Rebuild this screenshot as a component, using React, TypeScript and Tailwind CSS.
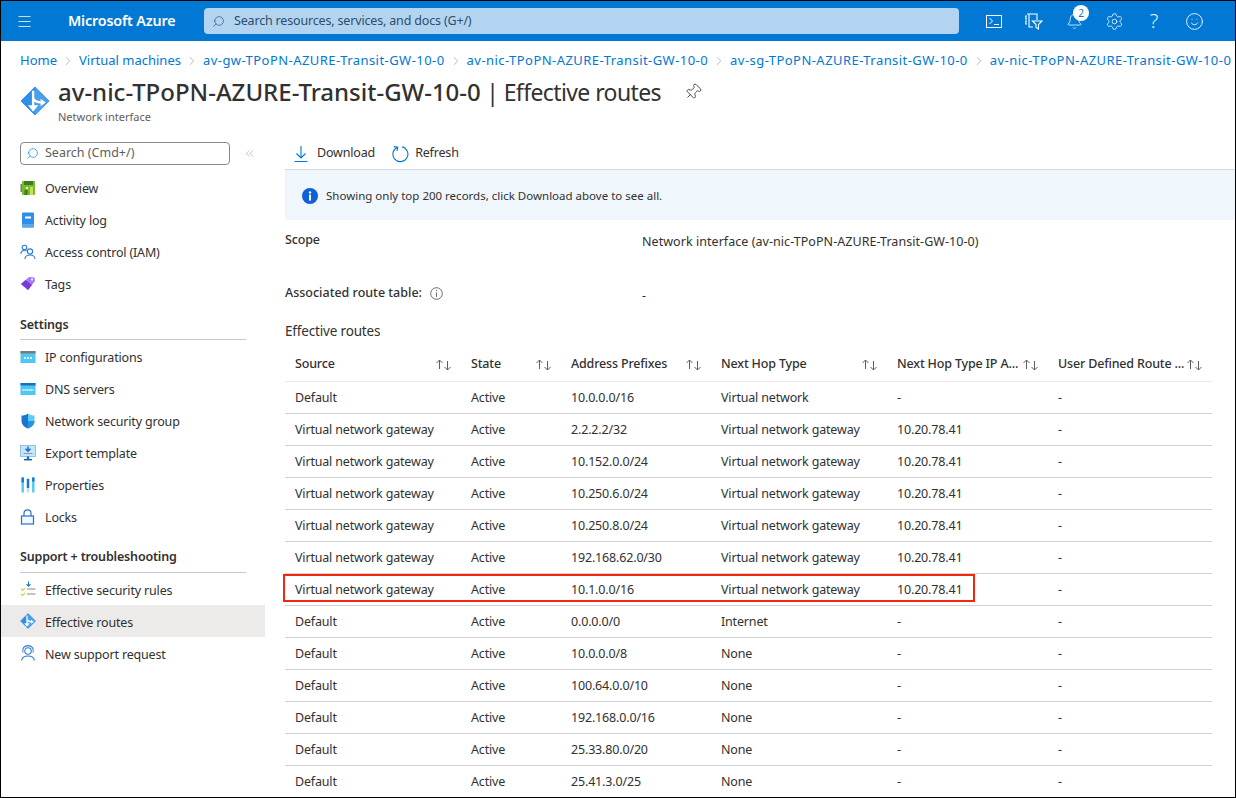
import React from "react";
import { Menu, Search, ChevronRight, ChevronsLeft, Pin, Bell, Settings, Smile } from "lucide-react";

function RouteIcon({ size = 16 }: { size?: number }) {
  return (
    <svg width={size} height={size} viewBox="0 0 32 32">
      <path d="M16 1 L31 16 L16 31 L1 16 Z" fill="#2f8fe6" stroke="#2f8fe6" strokeWidth="1" strokeLinejoin="round" />
      <path d="M16 1 L31 16 L16 31 Z" fill="#4d9fe9" />
      <path d="M14 5 V24 M14 13 C15 16 18 17.5 23 17.5" stroke="#ffffff" strokeWidth="2.6" fill="none" />
      <path d="M8.5 20.5 H19.5 L14 27.5 Z M22 13.5 V21.5 L27.5 17.5 Z" fill="#ffffff" />
    </svg>
  );
}

function SortArrows() {
  return (
    <svg width="18" height="12" viewBox="0 0 18 12" fill="none" stroke="#605e5c" strokeWidth="1">
      <path d="M4.5 10 V1 M1.5 4 L4.5 1 L7.5 4" />
      <path d="M12.5 2 V11 M9.5 8 L12.5 11 L15.5 8" />
    </svg>
  );
}

function DirectoryIcon() {
  return (
    <svg width="18" height="18" viewBox="0 0 18 18" fill="none" stroke="#ffffff" strokeWidth="1.1">
      <path d="M2 2 H12 V8 M4 2 V15 H8 M2 4 H0.8 V7 H2 M2 9 H0.8 V12 H2" />
      <path d="M7.5 9 H17 L13.5 12.5 V17 L11 15.5 V12.5 Z" />
    </svg>
  );
}

const sideIcons: Record<string, React.ReactNode> = {
  overview: (
    <svg width="16" height="16" viewBox="0 0 16 16">
      <rect x="0.5" y="4" width="2.5" height="8" fill="#7a7a7a" />
      <rect x="2" y="1" width="13" height="14" rx="1" fill="#76bc2d" />
      <rect x="4" y="1" width="9" height="4" fill="#3e7a22" />
      <rect x="6" y="7" width="2" height="2" fill="#e8f5d8" />
      <rect x="10" y="7" width="3" height="8" fill="#c9dd5a" />
      <rect x="4.5" y="10" width="3" height="5" fill="#3e7a22" />
    </svg>
  ),
  activity: (
    <svg width="16" height="16" viewBox="0 0 16 16">
      <rect x="2" y="0.5" width="12" height="15" rx="1" fill="#2f8fe6" />
      <rect x="2" y="12" width="12" height="3.5" rx="1" fill="#5ea7e8" />
      <rect x="5" y="4.5" width="6" height="2" fill="#ffffff" />
    </svg>
  ),
  iam: (
    <svg width="16" height="16" viewBox="0 0 16 16" fill="none" stroke="#2b7cd3" strokeWidth="1.1">
      <circle cx="4.5" cy="3.5" r="2.3" />
      <path d="M0.8 10 C1 7 3 6.5 4.5 6.5 C5.5 6.5 6 6.7 6.6 7" />
      <circle cx="10" cy="7.5" r="2.6" />
      <path d="M5 15 C5 12 7.5 11 10 11 C12.5 11 15 12 15 15" />
    </svg>
  ),
  tags: (
    <svg width="16" height="16" viewBox="0 0 16 16">
      <path d="M1 8 L9 1 L14.5 1.5 L15 5 L8 14 Z" fill="#a67af4" />
      <path d="M1 8 L8 14 L12 9 L5.5 4 Z" fill="#773adc" />
      <circle cx="12" cy="3.5" r="1" fill="#ffffff" />
    </svg>
  ),
  ip: (
    <svg width="16" height="16" viewBox="0 0 16 16">
      <rect x="0.5" y="2" width="15" height="12" fill="#50c7f3" />
      <rect x="0.5" y="2" width="15" height="2.5" fill="#7a7a7a" />
      <path d="M4 9 H12" stroke="#ffffff" strokeWidth="1.6" strokeDasharray="2 1" />
    </svg>
  ),
  dns: (
    <svg width="16" height="16" viewBox="0 0 16 16">
      <rect x="0.5" y="2" width="15" height="12" fill="#50c7f3" />
      <rect x="0.5" y="2" width="15" height="2.5" fill="#1b6fc2" />
      <path d="M2.5 9 H13.5" stroke="#ffffff" strokeWidth="1.6" strokeDasharray="1.4 0.6" />
    </svg>
  ),
  nsg: (
    <svg width="16" height="16" viewBox="0 0 16 16">
      <path d="M8 0.5 C10 2 12 2.5 14.5 2.5 V8 C14.5 12 11 14.5 8 15.5 Z" fill="#5ecbf3" />
      <path d="M8 0.5 C6 2 4 2.5 1.5 2.5 V8 C1.5 12 5 14.5 8 15.5 Z" fill="#1b74d0" />
      <path d="M1.5 8 H14.5 C14.5 12 11 14.5 8 15.5 V8 H1.5 Z" fill="#2a90e0" />
    </svg>
  ),
  export: (
    <svg width="16" height="16" viewBox="0 0 16 16">
      <rect x="0.5" y="0.5" width="15" height="11" fill="#c5e6f8" stroke="#7fb6da" strokeWidth="0.8" />
      <path d="M8 1.5 V6 M5.5 3.8 L8 6.3 L10.5 3.8" stroke="#1b6fc2" strokeWidth="1.5" fill="none" />
      <rect x="3.5" y="8" width="9" height="1" fill="#7a9cbc" />
      <rect x="6.8" y="11.5" width="2.4" height="2.5" fill="#1b6fc2" />
      <rect x="4" y="14" width="8" height="1.4" fill="#0f5aa5" />
    </svg>
  ),
  props: (
    <svg width="16" height="16" viewBox="0 0 16 16">
      <rect x="1.5" y="0.5" width="2.4" height="15" fill="#50c7f3" />
      <rect x="1.5" y="0.5" width="2.4" height="5" fill="#1b74d0" />
      <rect x="6.8" y="0.5" width="2.4" height="15" fill="#b3e3f7" />
      <rect x="6.8" y="2" width="2.4" height="9" fill="#1b74d0" />
      <rect x="12.1" y="0.5" width="2.4" height="15" fill="#50c7f3" />
      <rect x="12.1" y="0.5" width="2.4" height="4" fill="#1b74d0" />
    </svg>
  ),
  locks: (
    <svg width="16" height="16" viewBox="0 0 16 16" fill="none" stroke="#2b6fc4" strokeWidth="1.2">
      <rect x="1.5" y="7" width="12" height="8" fill="#f1f7fd" />
      <path d="M4 7 V4.2 C4 2.2 5.6 0.8 7.5 0.8 C9.4 0.8 11 2.2 11 4.2 V7" />
    </svg>
  ),
  security: (
    <svg width="16" height="16" viewBox="0 0 16 16" fill="none" strokeWidth="1.1">
      <path d="M8.5 0.5 V5 M6.5 3.2 L8.5 5.2 L10.5 3.2" stroke="#1b74d0" />
      <path d="M7 8 H15.5 M7 13 H15.5" stroke="#8a8886" />
      <path d="M1 8 L2.5 9.5 L5 7 M1 13 L2.5 14.5 L5 12" stroke="#d9c94a" />
    </svg>
  ),
  routes: <RouteIcon />,
  support: (
    <svg width="16" height="16" viewBox="0 0 16 16" fill="none" stroke="#2b7cd3" strokeWidth="1.1">
      <path d="M3 7.5 C1.8 3 4.5 0.6 8 0.6 C11.5 0.6 14.2 3 13 7.5" />
      <circle cx="8" cy="6" r="3.2" />
      <path d="M1.5 15.5 C2 12.5 4.5 11 8 11 C11.5 11 14 12.5 14.5 15.5" />
    </svg>
  ),
};

const sections = [
  {
    title: "",
    items: [
      { icon: "overview", label: "Overview" },
      { icon: "activity", label: "Activity log" },
      { icon: "iam", label: "Access control (IAM)" },
      { icon: "tags", label: "Tags" },
    ],
  },
  {
    title: "Settings",
    items: [
      { icon: "ip", label: "IP configurations" },
      { icon: "dns", label: "DNS servers" },
      { icon: "nsg", label: "Network security group" },
      { icon: "export", label: "Export template" },
      { icon: "props", label: "Properties" },
      { icon: "locks", label: "Locks" },
    ],
  },
  {
    title: "Support + troubleshooting",
    items: [
      { icon: "security", label: "Effective security rules" },
      { icon: "routes", label: "Effective routes", active: true },
      { icon: "support", label: "New support request" },
    ],
  },
];

const crumbs = [
  "Home",
  "Virtual machines",
  "av-gw-TPoPN-AZURE-Transit-GW-10-0",
  "av-nic-TPoPN-AZURE-Transit-GW-10-0",
  "av-sg-TPoPN-AZURE-Transit-GW-10-0",
  "av-nic-TPoPN-AZURE-Transit-GW-10-0",
];

const VNG = "Virtual network gateway";
const routes = [
  ["Default", "10.0.0.0/16", "Virtual network", "-"],
  [VNG, "2.2.2.2/32", VNG, "10.20.78.41"],
  [VNG, "10.152.0.0/24", VNG, "10.20.78.41"],
  [VNG, "10.250.6.0/24", VNG, "10.20.78.41"],
  [VNG, "10.250.8.0/24", VNG, "10.20.78.41"],
  [VNG, "192.168.62.0/30", VNG, "10.20.78.41"],
  [VNG, "10.1.0.0/16", VNG, "10.20.78.41"],
  ["Default", "0.0.0.0/0", "Internet", "-"],
  ["Default", "10.0.0.0/8", "None", "-"],
  ["Default", "100.64.0.0/10", "None", "-"],
  ["Default", "192.168.0.0/16", "None", "-"],
  ["Default", "25.33.80.0/20", "None", "-"],
  ["Default", "25.41.3.0/25", "None", "-"],
];

const columns = ["Source", "State", "Address Prefixes", "Next Hop Type", "Next Hop Type IP A...", "User Defined Route ..."];
const gridCols = "grid grid-cols-[176px_100px_150px_176px_161px_164px]";

export default function App() {
  return (
    <div className="w-[1236px] h-[798px] overflow-hidden border border-black bg-white text-[12.5px] tracking-[-0.17px] text-[#323130] font-['Noto_Sans',sans-serif]">
      {/* top bar */}
      <header className="h-10 bg-[#0078d4] flex items-center text-white">
        <div className="w-[67px] pl-[15px] shrink-0">
          <Menu size={17} strokeWidth={1.4} className="text-[#cfe4f6]" />
        </div>
        <div className="w-[136px] shrink-0 text-[14.3px] font-semibold">Microsoft Azure</div>
        <div className="w-[755px] h-[26px] shrink-0 rounded-sm bg-[#b3d4f1] flex items-center pl-2 gap-[9px] text-[#2d4e6e]">
          <Search size={13} strokeWidth={1.2} className="-scale-x-100" />
          <span>Search resources, services, and docs (G+/)</span>
        </div>
        <div className="ml-[15px] flex">
          <div className="w-10 h-10 flex items-center justify-center">
            <span className="w-4 h-[13px] border border-white flex items-center pl-[2px]">
              <svg width="11" height="9" viewBox="0 0 11 9" fill="none" stroke="#fff" strokeWidth="1"><path d="M0.5 1 L3.5 4 L0.5 7 M5 7.5 H10" /></svg>
            </span>
          </div>
          <div className="w-10 h-10 flex items-center justify-center"><DirectoryIcon /></div>
          <div className="w-10 h-10 flex items-center justify-center relative">
            <Bell size={17} strokeWidth={1.1} />
            <span className="absolute top-[4px] left-[19px] w-4 h-4 rounded-full bg-white text-[#0078d4] text-[10px] flex items-center justify-center">2</span>
          </div>
          <div className="w-10 h-10 flex items-center justify-center"><Settings size={19} strokeWidth={1} /></div>
          <div className="w-10 h-10 flex items-center justify-center text-[20px] font-light text-[#e4f0fa]">?</div>
          <div className="w-10 h-10 flex items-center justify-center"><Smile size={19} strokeWidth={1.1} /></div>
        </div>
      </header>

      {/* breadcrumb */}
      <nav className="h-[38px] pt-[2px] pl-[19px] flex items-center whitespace-nowrap text-[13px] tracking-normal text-[#0078d4]">
        {crumbs.map((crumb, i) => (
          <React.Fragment key={i}>
            {i > 0 && <ChevronRight size={14} strokeWidth={1} className="mx-[4px] text-[#8a8886] shrink-0" />}
            <span className={i > 1 ? "tracking-[0.45px]" : ""}>{crumb}</span>
          </React.Fragment>
        ))}
      </nav>

      {/* title */}
      <div className="h-[57px] pl-[19px] flex items-start">
        <div className="mt-[7px] mr-[8px] shrink-0"><RouteIcon size={30} /></div>
        <div>
          <div className="flex items-center h-[26px]">
            <h1 className="whitespace-nowrap tracking-normal">
              <span className="text-[24px] font-medium">av-nic-TPoPN-AZURE-Transit-GW-10-0</span>
              <span className="text-[23px] tracking-[-0.6px]"> | Effective routes</span>
            </h1>
            <Pin size={18} strokeWidth={1.1} className="ml-[23px] rotate-45" />
          </div>
          <div className="mt-[4px] text-[11px] tracking-normal text-[#605e5c]">Network interface</div>
        </div>
      </div>

      <div className="flex">
        {/* sidebar */}
        <aside className="w-[264px] shrink-0">
          <div className="pt-[6px] pl-[19px] flex items-center">
            <div className="w-[210px] h-[23px] border border-[#8a8886] rounded-sm flex items-center pl-[5px] gap-[6px] text-[#605e5c] tracking-normal">
              <Search size={13} strokeWidth={1.2} className="-scale-x-100 text-[#0078d4]" />
              <span>Search (Cmd+/)</span>
            </div>
            <ChevronsLeft size={13} strokeWidth={1} className="ml-[13px] text-[#8a8886]" />
          </div>
          <div className="h-[7px]" />
          {sections.map((section, i) => (
            <div key={i}>
              {section.title && (
                <div className={`mx-[19px] h-10 flex items-end font-semibold border-b border-[#c8c6c6] ${i === 2 ? "pb-[5px]" : "pb-[4px] mb-[1px]"}`}>
                  {section.title}
                </div>
              )}
              {section.items.map((item) => (
                <div key={item.label} className={`h-8 pl-[19px] flex items-center gap-[9px] ${i === 2 ? "pt-1" : "pt-[2px]"} ${"active" in item && item.active ? "bg-[#edebe9]" : ""}`}>
                  <span className={`w-4 h-4 shrink-0 ${i === 2 ? "-mt-1" : "-mt-[2px]"}`}>{sideIcons[item.icon]}</span>
                  <span>{item.label}</span>
                </div>
              ))}
            </div>
          ))}
        </aside>

        {/* main */}
        <main className="flex-1 min-w-0 pl-5">
          <div className="h-[34px] pt-[2px] flex items-center border-b border-[#d8d8d8] pl-[8px]">
            <svg width="16" height="18" viewBox="0 0 16 18" fill="none" stroke="#0078d4" strokeWidth="1.1">
              <path d="M8 1 V13 M3.5 8.5 L8 13 L12.5 8.5 M1.5 16.5 H14.5" />
            </svg>
            <span className="ml-[8px]">Download</span>
            <svg className="ml-[16px]" width="18" height="18" viewBox="0 0 18 18" fill="none" stroke="#0078d4" strokeWidth="1.1">
              <path d="M6.5 2.2 A7.5 7.5 0 1 0 11 1.8" />
              <path d="M2.8 1.6 L6.8 2.2 L6 6" />
            </svg>
            <span className="ml-[6px]">Refresh</span>
          </div>
          <div className="h-[50px] pt-[2px] bg-[#eff6fc] flex items-center pl-[17px] gap-2 text-[11.5px] tracking-normal">
            <svg width="16" height="16" viewBox="0 0 16 16">
              <circle cx="8" cy="8" r="8" fill="#0f62d6" />
              <circle cx="8" cy="4.4" r="1.2" fill="#ffffff" />
              <rect x="7" y="6.6" width="2" height="6" fill="#ffffff" />
            </svg>
            <span>Showing only top 200 records, click Download above to see all.</span>
          </div>
          <div className="mt-[10px] flex h-5 items-center">
            <div className="w-[357px] font-medium">Scope</div>
            <div className="mt-1 tracking-[0.05px]">Network interface (av-nic-TPoPN-AZURE-Transit-GW-10-0)</div>
          </div>
          <div className="mt-[33px] flex h-5 items-center">
            <div className="w-[357px] font-medium tracking-normal flex items-center gap-2">
              Associated route table:
              <svg width="13" height="13" viewBox="0 0 13 13" fill="none" stroke="#605e5c" strokeWidth="0.9">
                <circle cx="6.5" cy="6.5" r="5.8" />
                <path d="M6.5 5.5 V10 M6.5 3 V4.2" />
              </svg>
            </div>
            <div className="mt-[6px]">-</div>
          </div>
          <div className="mt-[18px] h-5 text-[13.5px]">Effective routes</div>

          <div className="relative mt-2 w-[927px]">
            <div className={`${gridCols} h-[33px] pb-[1px] items-center font-medium border-b border-[#edebe9]`}>
              {columns.map((column) => (
                <div key={column} className="pl-[10px] pr-[8px] flex items-center justify-between whitespace-nowrap">
                  <span>{column}</span>
                  <SortArrows />
                </div>
              ))}
            </div>
            {routes.map((row, i) => (
              <div key={i} className={`${gridCols} h-8 pt-[2px] items-center border-b border-[#d2d0ce]`}>
                <div className="pl-[10px]">{row[0]}</div>
                <div className="pl-[10px]">Active</div>
                <div className="pl-[10px]">{row[1]}</div>
                <div className="pl-[10px]">{row[2]}</div>
                <div className="pl-[10px]">{row[3]}</div>
                <div className="pl-[10px]">-</div>
              </div>
            ))}
            {/* callout round the matching route */}
            <div className="absolute left-[-2px] top-[225px] w-[692px] h-[28px] border-2 border-[#f5260f]" />
          </div>
        </main>
      </div>
    </div>
  );
}
